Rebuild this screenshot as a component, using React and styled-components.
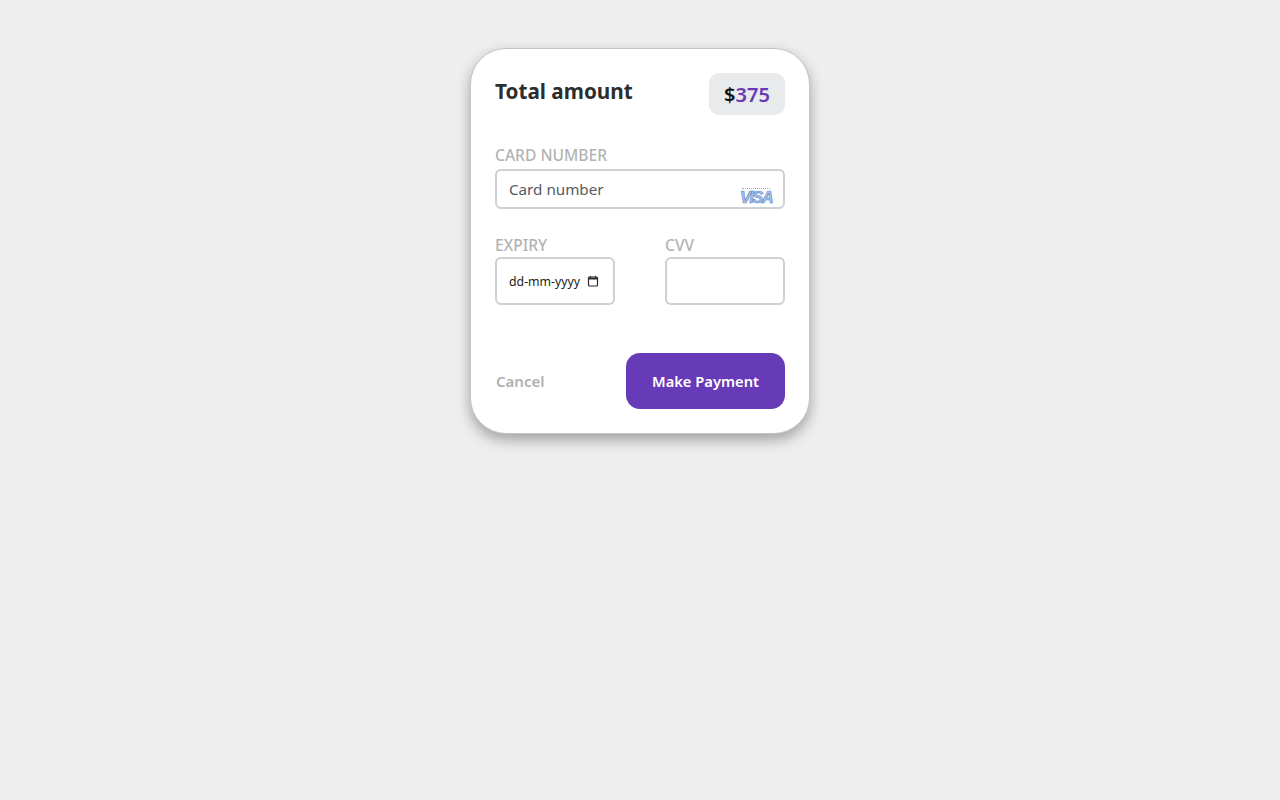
import React from 'react';
import styled, { createGlobalStyle } from 'styled-components';

const GlobalStyle = createGlobalStyle`
    * { box-sizing: border-box; }
    body {
        margin: 0;
        background-color: #eeeeee;
        font-family: "Noto Sans", "Open Sans", sans-serif;
    }
`;
const Page = styled.div`
    display: flex;
    justify-content: center;
    min-height: 100vh;
    padding-top: 48px;
`;
const Card = styled.form`
    width: 340px;
    height: 386px;
    padding: 24px;
    background-color: #fff;
    border: 1px solid #c4c4c4;
    border-radius: 36px;
    box-shadow: 0 6px 14px rgba(0, 0, 0, 0.32);
`;
const Header = styled.div`
    display: flex;
    justify-content: space-between;
    align-items: flex-start;
    margin-bottom: 30px;
`;
const Title = styled.h1`
    margin: 0;
    font-size: 20.7px;
    line-height: 36px;
    font-weight: 700;
    color: #2d2d2d;
`;
const Price = styled.div`
    display: flex;
    align-items: center;
    justify-content: center;
    width: 76px;
    height: 42px;
    border-radius: 10px;
    background-color: #e9eaec;
    font-size: 20px;
    font-weight: 600;
    color: #111;
`;
const Amount = styled.span`
    color: #673ab7;
`;
const Field = styled.div`
    display: flex;
    flex-direction: column;
    width: ${({ $width }) => $width || '100%'};
`;
const Label = styled.label`
    margin-bottom: ${({ $gap }) => $gap}px;
    font-size: 15.6px;
    line-height: 21px;
    font-weight: 500;
    color: #b3b3b3;
`;
const Input = styled.input`
    display: block;
    width: 100%;
    height: ${({ $height }) => $height}px;
    padding: 0 12px;
    border: 2px solid #cdd0d5;
    border-radius: 6px;
    outline: none;
    background: #fff;
    font-family: inherit;
    font-size: ${({ $size }) => $size}px;
    color: #222;
    &::placeholder {
        color: ${({ $hint }) => $hint};
        opacity: 1;
    }
`;
const InputWrap = styled.div`
    position: relative;
`;
const VisaBadge = styled.span`
    position: absolute;
    right: 14px;
    bottom: 6px;
    display: flex;
    flex-direction: column;
    align-items: center;
    gap: 2px;
    width: 30px;
`;
const VisaDots = styled.span`
    width: 28px;
    height: 1px;
    border-top: 1px dotted #b79fc0;
`;
const VisaText = styled.span`
    font-family: "Liberation Sans", sans-serif;
    font-size: 16.5px;
    line-height: 12px;
    font-weight: 700;
    font-style: italic;
    letter-spacing: -1.6px;
    color: #a9c4ea;
    -webkit-text-stroke: 0.7px #6a8fc8;
`;
const CalendarIcon = styled.svg`
    position: absolute;
    right: 16px;
    top: 18px;
    width: 12px;
    height: 12px;
`;
const Row = styled.div`
    display: flex;
    justify-content: space-between;
    margin-top: 26px;
`;
const Footer = styled.div`
    display: flex;
    justify-content: space-between;
    align-items: center;
    margin-top: 48px;
`;
const Cancel = styled.button`
    padding: 0 1px;
    border: none;
    background: transparent;
    font-family: inherit;
    font-size: 15px;
    font-weight: 600;
    color: #b0b0b0;
    cursor: pointer;
`;
const Pay = styled.button`
    width: 159px;
    height: 56px;
    border: none;
    border-radius: 14px;
    background-color: #673ab7;
    font-family: inherit;
    font-size: 14.7px;
    font-weight: 600;
    color: #fff;
    cursor: pointer;
`;

const App = () => {
    return (
        <Page>
            <GlobalStyle />
            <Card onSubmit={e => e.preventDefault()}>
                <Header>
                    <Title>Total amount</Title>
                    <Price>$<Amount>375</Amount></Price>
                </Header>
                <Field>
                    <Label $gap={3}>CARD NUMBER</Label>
                    <InputWrap>
                        <Input $height={40} $size={15.2} $hint="#555a60" placeholder="Card number" />
                        <VisaBadge>
                            <VisaDots />
                            <VisaText>VISA</VisaText>
                        </VisaBadge>
                    </InputWrap>
                </Field>
                <Row>
                    <Field $width="120px">
                        <Label $gap={1}>EXPIRY</Label>
                        <InputWrap>
                            <Input $height={48} $size={12.3} $hint="#1c1c1c" placeholder="dd-mm-yyyy" />
                            <CalendarIcon viewBox="0 0 12 12" fill="none">
                                <rect x="1.5" y="2" width="9" height="9" rx="1" stroke="#2a2a2a" strokeWidth="1.2" />
                                <path d="M1.5 2.5h9v2h-9z" fill="#2a2a2a" />
                                <path d="M3.5 0.8v1.6M8.5 0.8v1.6" stroke="#2a2a2a" strokeWidth="1" />
                            </CalendarIcon>
                        </InputWrap>
                    </Field>
                    <Field $width="120px">
                        <Label $gap={1}>CVV</Label>
                        <Input $height={48} $size={13} />
                    </Field>
                </Row>
                <Footer>
                    <Cancel type="button">Cancel</Cancel>
                    <Pay type="submit">Make Payment</Pay>
                </Footer>
            </Card>
        </Page>
    )
}

export default App
